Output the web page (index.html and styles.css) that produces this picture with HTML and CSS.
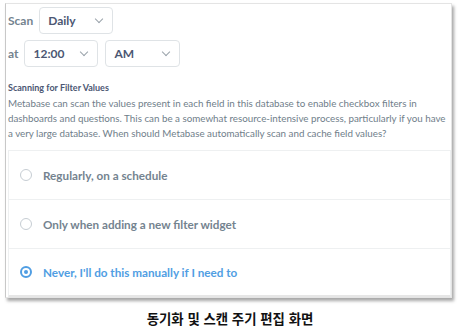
FILE: index.html
```html
<!DOCTYPE html>
<html lang="ko">
<head>
  <meta charset="UTF-8">
  <title>동기화 및 스캔 주기 편집 화면</title>
  <link rel="stylesheet" href="styles.css">
</head>
<body>
  <div class="shot">
    <div class="sched-row">
      <span class="lbl">Scan</span>
      <div class="select sel-daily">Daily <span class="chev"></span></div>
    </div>
    <div class="sched-row">
      <span class="lbl">at</span>
      <div class="select sel-hour">12:00 <span class="chev"></span></div>
      <div class="select sel-ampm">AM <span class="chev"></span></div>
    </div>
    <div class="section-title">Scanning for Filter Values</div>
    <p class="desc">Metabase can scan the values present in each field in this database to enable checkbox filters in dashboards and questions. This can be a somewhat resource-intensive process, particularly if you have a very large database. When should Metabase automatically scan and cache field values?</p>
    <div class="options">
      <div class="opt"><span class="radio"></span>Regularly, on a schedule</div>
      <div class="opt"><span class="radio"></span>Only when adding a new filter widget</div>
      <div class="opt active"><span class="radio"></span>Never, I'll do this manually if I need to</div>
    </div>
  </div>
  <div class="caption">동기화 및 스캔 주기 편집 화면</div>
</body>
</html>
```

FILE: styles.css
```css
html, body {
  margin: 0;
  background: #fff;
}
body {
  font-family: Lato, 'Open Sans', sans-serif;
  color: #74838f;
}
.shot {
  margin: 3px 0 0 5px;
  width: 447px;
  height: 295px;
  border: 1px solid #e4e4e4;
  border-left-color: #c8c8c8;
  box-shadow: 2px 3px 3px rgba(0,0,0,0.35);
  padding: 3px 0 0 2px;
  box-sizing: border-box;
  display: flex;
  flex-direction: column;
  overflow: hidden;
}
.sched-row {
  display: flex;
  align-items: center;
  gap: 6px;
  margin-bottom: 6px;
}
.sched-row .lbl {
  font-size: 12px;
  font-weight: 700;
  color: #74838f;
}
.select {
  box-sizing: border-box;
  height: 27px;
  border: 1px solid #dfe3e6;
  border-radius: 4px;
  display: flex;
  align-items: center;
  justify-content: space-between;
  padding: 0 10px 0 8px;
  font-size: 12px;
  font-weight: 700;
  color: #4c5773;
}
.sel-daily { width: 74px; }
.sel-hour { width: 74px; }
.sel-ampm { width: 75px; margin-left: 1px; }
.chev {
  width: 5px;
  height: 5px;
  border-right: 1.2px solid #9aa3ab;
  border-bottom: 1.2px solid #9aa3ab;
  transform: rotate(45deg);
  margin-top: -3px;
}
.section-title {
  margin-top: 9px;
  font-size: 9px;
  font-weight: 700;
  color: #4c5773;
}
.desc {
  margin: 3px 0 0;
  font-size: 9.8px;
  line-height: 15px;
  color: #6f7e8a;
}
.options {
  margin-top: 9px;
  width: 443px;
  border: 1px solid #eef0f1;
  border-bottom: 3px solid #e6e6e6;
  box-sizing: border-box;
  display: flex;
  flex-direction: column;
  flex-shrink: 0;
}
.opt {
  height: 49px;
  display: flex;
  align-items: center;
  padding-left: 11px;
  font-size: 11.7px;
  font-weight: 700;
  color: #74838f;
  border-bottom: 1px solid #eef0f1;
  box-sizing: border-box;
}
.opt:last-child { border-bottom: none; height: 46px; }
.radio {
  width: 12px;
  height: 12px;
  border: 1.5px solid #c6cdd3;
  border-radius: 50%;
  box-sizing: border-box;
  margin-right: 11px;
  position: relative;
}
.opt.active { color: #509ee3; }
.opt.active .radio {
  border: 2px solid #509ee3;
}
.opt.active .radio::after {
  content: "";
  position: absolute;
  left: 2px; top: 2px;
  width: 4px; height: 4px;
  border-radius: 50%;
  background: #509ee3;
}
.caption {
  margin-top: 10px;
  text-align: center;
  font-family: 'Noto Sans CJK KR', sans-serif;
  font-weight: 700;
  font-size: 13.4px;
  color: #111;
}
```
